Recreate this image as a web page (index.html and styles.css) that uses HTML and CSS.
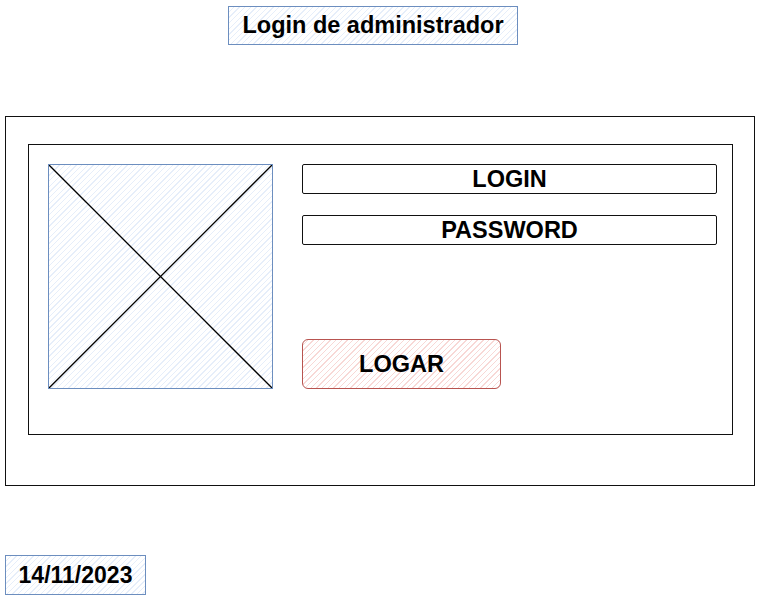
FILE: index.html
```html
<!DOCTYPE html>
<html lang="pt">
<head>
  <meta charset="UTF-8" />
  <meta name="viewport" content="width=device-width, initial-scale=1.0" />
  <title>Login de administrador</title>
  <link rel="stylesheet" href="styles.css">
</head>
<body>

  <!-- titulo -->
  <div class="title hatch-blue">Login de administrador</div>

  <!-- moldura externa -->
  <div class="frame">
    <div class="panel">
      <div class="picture hatch-blue">
        <svg viewBox="0 0 225 225" preserveAspectRatio="none">
          <line x1="0" y1="0" x2="225" y2="225" />
          <line x1="225" y1="0" x2="0" y2="225" />
        </svg>
      </div>
      <div class="form">
        <div class="field">LOGIN</div>
        <div class="field">PASSWORD</div>
        <button class="btn-logar">LOGAR</button>
      </div>
    </div>
  </div>

  <!-- data -->
  <div class="date hatch-blue">14/11/2023</div>

</body>
</html>
```

FILE: styles.css
```css
* {
  box-sizing: border-box;
}

body {
  margin: 0;
  font-family: 'Liberation Sans', Arial, sans-serif;
  font-weight: bold;
  color: #000;
  background: #fff;
}

.hatch-blue {
  border: 1px solid #6c8ebf;
  background: repeating-linear-gradient(135deg, #fff 0, #fff 3px, #e6eefa 3px, #e6eefa 4px);
}

.title {
  margin: 6px 0 0 228px;
  width: 290px;
  height: 39px;
  display: flex;
  align-items: center;
  justify-content: center;
  font-size: 23.5px;
}

.frame {
  margin: 71px 0 0 5px;
  width: 750px;
  height: 370px;
  border: 1px solid #111;
  padding: 27px 0 0 22px;
}

.panel {
  width: 705px;
  height: 291px;
  border: 1px solid #111;
  padding: 19px 0 0 19px;
  display: flex;
  gap: 29px;
}

.picture {
  width: 225px;
  height: 225px;
  flex: none;
}

.picture svg {
  display: block;
  width: 100%;
  height: 100%;
}

.picture line {
  stroke: #000;
  stroke-width: 1.3;
}

.form {
  width: 415px;
  flex: none;
  display: flex;
  flex-direction: column;
  gap: 21px;
}

.field {
  height: 30px;
  border: 1px solid #111;
  border-radius: 2px;
  display: flex;
  align-items: center;
  justify-content: center;
  font-size: 23.5px;
}

.btn-logar {
  margin-top: 73px;
  width: 199px;
  height: 50px;
  border: 1.5px solid #b85450;
  border-radius: 6px;
  background: repeating-linear-gradient(135deg, #fff 0, #fff 3px, #f8d8d6 3px, #f8d8d6 4px);
  font-family: inherit;
  font-weight: bold;
  font-size: 23.5px;
  color: #000;
  padding: 0;
}

.date {
  margin: 69px 0 0 5px;
  width: 141px;
  height: 40px;
  display: flex;
  align-items: center;
  justify-content: center;
  font-size: 23px;
}
```
